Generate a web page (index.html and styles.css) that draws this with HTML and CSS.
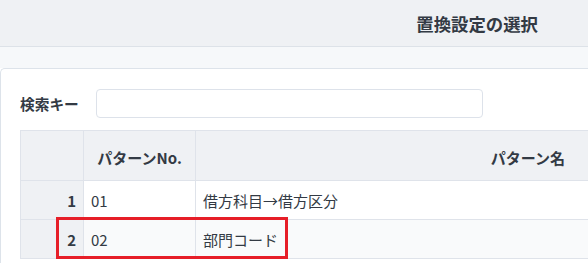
FILE: index.html
```html
<!DOCTYPE html>
<html lang="ja">
<head>
<meta charset="utf-8">
<title>置換設定の選択</title>
<link rel="stylesheet" href="styles.css">
</head>
<body>
<div class="page">
  <header class="topbar">
    <h1 class="title">置換設定の選択</h1>
  </header>
  <div class="band"></div>
  <section class="panel">
    <div class="search">
      <label class="search-label" for="key">検索キー</label>
      <input class="search-input" id="key" type="text">
    </div>
    <div class="table-wrap">
      <table class="grid">
        <colgroup>
          <col class="c-num">
          <col class="c-no">
          <col class="c-name">
        </colgroup>
        <thead>
          <tr>
            <th class="num"></th>
            <th>パターンNo.</th>
            <th>パターン名</th>
          </tr>
        </thead>
        <tbody>
          <tr>
            <td class="num">1</td>
            <td>01</td>
            <td>借方科目→借方区分</td>
          </tr>
          <tr class="alt">
            <td class="num">2</td>
            <td>02</td>
            <td>部門コード</td>
          </tr>
        </tbody>
      </table>
      <div class="highlight"></div>
    </div>
  </section>
</div>
</body>
</html>
```
FILE: styles.css
```css
html, body {
  margin: 0;
  padding: 0;
  overflow: hidden;
  background: #ffffff;
}
body {
  font-family: "Noto Sans CJK JP", "Noto Sans", sans-serif;
  color: #333a44;
}
.page {
  width: 960px;
}
.topbar {
  height: 46px;
  background: #eff1f4;
  border-bottom: 1px solid #dde2e8;
  display: flex;
  align-items: center;
  justify-content: flex-end;
  padding-right: 422px;
}
.title {
  margin: 0;
  font-size: 17.4px;
  font-weight: 700;
  line-height: 1;
  color: #333a44;
  padding-top: 2px;
}
.band {
  height: 21px;
  background: #f6f8fa;
}
.panel {
  background: #ffffff;
  border: 1px solid #dde3ea;
  border-right: none;
  border-radius: 5px 0 0 0;
  padding: 20px 0 0 19px;
  height: 220px;
}
.search {
  display: flex;
  align-items: center;
  gap: 15px;
}
.search-label {
  font-size: 14.7px;
  font-weight: 700;
  width: 61px;
  white-space: nowrap;
  color: #333a44;
}
.search-input {
  width: 387px;
  height: 29px;
  box-sizing: border-box;
  border: 1px solid #dde2ea;
  border-radius: 4px;
  background: #fff;
  margin: 0;
  padding: 0 8px;
}
.table-wrap {
  position: relative;
  margin-top: 12px;
}
.grid {
  border-collapse: collapse;
  table-layout: fixed;
  width: 840px;
  font-size: 15px;
}
.c-num { width: 63px; }
.c-no { width: 112px; }
.c-name { width: 665px; }
.grid th, .grid td {
  border: 1px solid #dfe3ea;
  padding: 0 7px;
  line-height: 1;
}
.grid th {
  height: 46px;
  background: #eff1f4;
  font-weight: 700;
  text-align: center;
  padding-top: 3px;
}
.grid td {
  height: 37px;
  padding-top: 1px;
}
.grid .num {
  background: #eff1f4;
  text-align: right;
  font-weight: 700;
}
.grid tr.alt td {
  background: #f9fafb;
}
.grid tr.alt td.num {
  background: #eff1f4;
}
.highlight {
  position: absolute;
  left: 36px;
  top: 87px;
  width: 226px;
  height: 36px;
  border: 3px solid #e61e28;
  pointer-events: none;
}
```
